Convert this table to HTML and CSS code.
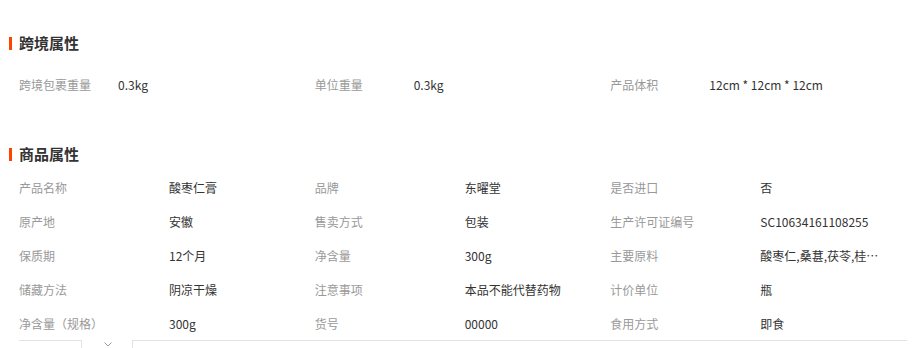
FILE: index.html
```html
<!DOCTYPE html>
<html lang="zh-CN">
<head>
<meta charset="utf-8">
<title>商品属性</title>
<link rel="stylesheet" href="styles.css">
</head>
<body>
<div class="page">
  <section class="section sec-cross">
    <h2 class="title"><span class="bar"></span>跨境属性</h2>
    <div class="grid grid-narrow">
      <div class="cell"><span class="label">跨境包裹重量</span><span class="value">0.3kg</span></div>
      <div class="cell"><span class="label">单位重量</span><span class="value">0.3kg</span></div>
      <div class="cell"><span class="label">产品体积</span><span class="value">12cm * 12cm * 12cm</span></div>
    </div>
  </section>

  <section class="section sec-goods">
    <h2 class="title"><span class="bar"></span>商品属性</h2>
    <div class="grid">
      <div class="cell"><span class="label">产品名称</span><span class="value">酸枣仁膏</span></div>
      <div class="cell"><span class="label">品牌</span><span class="value">东曜堂</span></div>
      <div class="cell"><span class="label">是否进口</span><span class="value">否</span></div>

      <div class="cell"><span class="label">原产地</span><span class="value">安徽</span></div>
      <div class="cell"><span class="label">售卖方式</span><span class="value">包装</span></div>
      <div class="cell"><span class="label">生产许可证编号</span><span class="value">SC10634161108255</span></div>

      <div class="cell"><span class="label">保质期</span><span class="value">12个月</span></div>
      <div class="cell"><span class="label">净含量</span><span class="value">300g</span></div>
      <div class="cell"><span class="label">主要原料</span><span class="value">酸枣仁,桑葚,茯苓,桂…</span></div>

      <div class="cell"><span class="label">储藏方法</span><span class="value">阴凉干燥</span></div>
      <div class="cell"><span class="label">注意事项</span><span class="value">本品不能代替药物</span></div>
      <div class="cell"><span class="label">计价单位</span><span class="value">瓶</span></div>

      <div class="cell"><span class="label">净含量（规格）</span><span class="value">300g</span></div>
      <div class="cell"><span class="label">货号</span><span class="value">00000</span></div>
      <div class="cell"><span class="label">食用方式</span><span class="value">即食</span></div>
    </div>
  </section>

  <div class="tabs">
    <div class="tab-box"></div>
    <div class="tab-arrow">
      <svg width="8" height="5" viewBox="0 0 8 5" aria-hidden="true"><polyline points="0.5,0.5 4,4 7.5,0.5" fill="none" stroke="#999" stroke-width="1"/></svg>
    </div>
    <div class="tab-main"></div>
  </div>
</div>
</body>
</html>
```

FILE: styles.css
```css
html, body {
  margin: 0;
  padding: 0;
  background: #fff;
}

body {
  font-family: "Noto Sans CJK SC", "Noto Sans", "Liberation Sans", sans-serif;
  font-size: 12px;
  color: #333;
  overflow: hidden;
}

.page {
  width: 921px;
  height: 348px;
  overflow: hidden;
}

.section {
  padding-left: 9px;
  padding-right: 15px;
}

.sec-cross {
  padding-top: 33px;
}

.sec-goods {
  padding-top: 43px;
}

.title {
  display: flex;
  align-items: center;
  gap: 7px;
  margin: 0;
  height: 20px;
  font-size: 15px;
  font-weight: bold;
  color: #333;
  line-height: 20px;
}

.bar {
  display: block;
  width: 3px;
  height: 13px;
  background: #ff4400;
}

.sec-cross .title {
  margin-bottom: 14px;
}

.sec-goods .title {
  margin-bottom: 6px;
}

.grid {
  display: grid;
  grid-template-columns: repeat(3, 1fr);
  padding-left: 10px;
  --label-w: 150px;
}

.grid-narrow {
  --label-w: 99px;
}

.cell {
  display: flex;
  align-items: center;
  height: 34px;
  min-width: 0;
}

.label {
  flex: 0 0 var(--label-w);
  color: #999;
  white-space: nowrap;
}

.value {
  color: #333;
  white-space: nowrap;
}

.tabs {
  display: flex;
  padding-left: 19px;
  padding-right: 14px;
  height: 20px;
}

.tab-box {
  width: 62px;
  border-top: 1px solid #e3e3e3;
  border-right: 1px solid #e3e3e3;
}

.tab-arrow {
  width: 50px;
  display: flex;
  justify-content: center;
  padding-top: 2px;
  padding-left: 2px;
  box-sizing: border-box;
}

.tab-arrow svg {
  display: block;
}

.tab-main {
  flex: 1;
  border-top: 1px solid #e3e3e3;
  border-left: 1px solid #e3e3e3;
}
```
